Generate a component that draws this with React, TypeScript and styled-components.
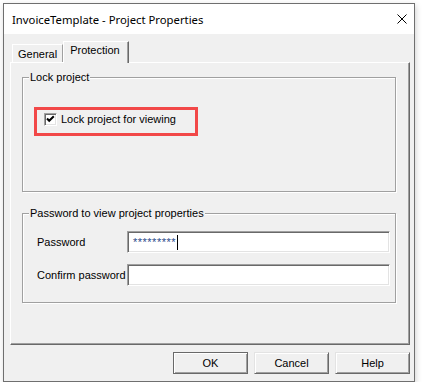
import styled, { createGlobalStyle } from 'styled-components';

const GlobalStyle = createGlobalStyle`
	html, body {
		margin: 0;
		padding: 0;
		background: #fff;
	}
	body {
		font-family: "Liberation Sans", Arial, sans-serif;
		font-size: 11px;
		color: #000;
	}
`;

const Window = styled.div`
	margin: 3px 0 0 3px;
	width: 412px;
	height: 379px;
	box-sizing: border-box;
	border: 1px solid #6f6f6f;
	background: #f0f0f0;
	display: flex;
	flex-direction: column;
	box-shadow: 1px 2px 6px rgba(0, 0, 0, 0.18);
`;

const TitleBar = styled.div`
	height: 30px;
	flex: none;
	background: #fff;
	display: flex;
	align-items: center;
	justify-content: space-between;
	padding: 0 7px 0 8px;
	font-family: "Noto Sans", "Open Sans", sans-serif;
	font-size: 11.3px;
`;

const CloseButton = styled.div`
	width: 10px;
	height: 10px;
	display: flex;
`;

const Body = styled.div`
	flex: 1;
	display: flex;
	flex-direction: column;
	padding: 7px 4px 7px 6px;
`;

const TabStrip = styled.div`
	height: 21px;
	display: flex;
	align-items: flex-end;
	padding-left: 2px;
`;

const Tab = styled.div<{ $active?: boolean }>`
	position: relative;
	z-index: ${(p) => (p.$active ? 2 : 1)};
	box-sizing: border-box;
	height: ${(p) => (p.$active ? 22 : 18)}px;
	margin-bottom: ${(p) => (p.$active ? -1 : 0)}px;
	padding: ${(p) => (p.$active ? '2px 8px 0 6px' : '3px 5px 0 5px')};
	background: #f0f0f0;
	border-top: 1px solid #fff;
	border-left: 1px solid #fff;
	border-right: 1px solid ${(p) => (p.$active ? '#696969' : '#a0a0a0')};
	box-shadow: ${(p) => (p.$active ? 'inset -1px 0 0 #a0a0a0' : 'none')};
	line-height: 13px;
`;

const Panel = styled.div`
	height: 283px;
	box-sizing: border-box;
	border-top: 1px solid #fff;
	border-left: 1px solid #fff;
	border-right: 1px solid #696969;
	border-bottom: 1px solid #696969;
	box-shadow: inset -1px -1px 0 #a0a0a0;
	padding: 14px 13px 0 11px;
`;

const Group = styled.div<{ $height: number }>`
	position: relative;
	height: ${(p) => p.$height}px;
	box-sizing: border-box;
	border: 1px solid #a0a0a0;
	box-shadow: inset 1px 1px 0 #fff, 1px 1px 0 #fff;
	& + & {
		margin-top: 21px;
	}
`;

const GroupLabel = styled.span`
	position: absolute;
	top: -7px;
	left: 6px;
	padding: 0 1px;
	background: #f0f0f0;
	line-height: 13px;
	white-space: nowrap;
`;

const LockContent = styled.div`
	padding: 29px 0 0 11px;
`;

const Highlight = styled.div`
	width: 164px;
	height: 29px;
	box-sizing: border-box;
	border: 3px solid #f24848;
	display: flex;
	align-items: flex-start;
	gap: 4px;
	padding: 3px 0 0 7px;
	line-height: 13px;
`;

const CheckBox = styled.div`
	width: 13px;
	height: 13px;
	box-sizing: border-box;
	flex: none;
	background: #fff;
	border-top: 1px solid #a0a0a0;
	border-left: 1px solid #a0a0a0;
	border-right: 1px solid #fff;
	border-bottom: 1px solid #fff;
	box-shadow: inset 1px 1px 0 #696969, inset -1px -1px 0 #e3e3e3;
	display: flex;
`;

const PasswordContent = styled.div`
	padding: 17px 5px 0 14px;
	display: flex;
	flex-direction: column;
	gap: 11px;
`;

const Row = styled.div`
	display: flex;
	align-items: center;
`;

const FieldLabel = styled.span`
	width: 90px;
	flex: none;
	white-space: nowrap;
`;

const Field = styled.div`
	width: 263px;
	height: 22px;
	box-sizing: border-box;
	background: #fff;
	border-top: 1px solid #a0a0a0;
	border-left: 1px solid #a0a0a0;
	border-right: 1px solid #fff;
	border-bottom: 1px solid #fff;
	box-shadow: inset 1px 1px 0 #696969, inset -1px -1px 0 #e3e3e3;
	display: flex;
	align-items: center;
	padding-left: 5px;
	color: #2a4a8a;
	font-size: 11px;
	letter-spacing: 0.5px;
`;

const Caret = styled.span`
	width: 1px;
	height: 15px;
	background: #000;
	margin-left: 1px;
`;

const Footer = styled.div`
	display: flex;
	justify-content: flex-end;
	gap: 6px;
	padding-top: 7px;
`;

const Button = styled.button<{ $default?: boolean }>`
	width: 75px;
	height: 22px;
	box-sizing: border-box;
	margin: 0;
	padding: 0;
	font: inherit;
	color: #000;
	background: #f0f0f0;
	border: 1px solid;
	border-color: ${(p) =>
		p.$default ? '#696969' : '#e3e3e3 #696969 #696969 #e3e3e3'};
	box-shadow: inset 1px 1px 0 #fff, inset -1px -1px 0 #a0a0a0;
`;

export default function App() {
	return (
		<>
			<GlobalStyle />
			<Window>
				<TitleBar>
					<span>InvoiceTemplate - Project Properties</span>
					<CloseButton>
						<svg width="10" height="10" viewBox="0 0 10 10">
							<path d="M0.5 0.5 L9.5 9.5 M9.5 0.5 L0.5 9.5" stroke="#000" strokeWidth="1" fill="none" />
						</svg>
					</CloseButton>
				</TitleBar>
				<Body>
					<TabStrip>
						<Tab>General</Tab>
						<Tab $active>Protection</Tab>
					</TabStrip>
					<Panel>
						<Group $height={115}>
							<GroupLabel>Lock project</GroupLabel>
							<LockContent>
								<Highlight>
									<CheckBox>
										<svg width="11" height="11" viewBox="0 0 11 11">
											<path d="M2 4.5 L4.2 6.8 L8.8 2.2" stroke="#000" strokeWidth="2" fill="none" />
										</svg>
									</CheckBox>
									<span>Lock project for viewing</span>
								</Highlight>
							</LockContent>
						</Group>
						<Group $height={90}>
							<GroupLabel>Password to view project properties</GroupLabel>
							<PasswordContent>
								<Row>
									<FieldLabel>Password</FieldLabel>
									<Field>
										<span>*********</span>
										<Caret />
									</Field>
								</Row>
								<Row>
									<FieldLabel>Confirm password</FieldLabel>
									<Field />
								</Row>
							</PasswordContent>
						</Group>
					</Panel>
					<Footer>
						<Button $default>OK</Button>
						<Button>Cancel</Button>
						<Button>Help</Button>
					</Footer>
				</Body>
			</Window>
		</>
	);
}
